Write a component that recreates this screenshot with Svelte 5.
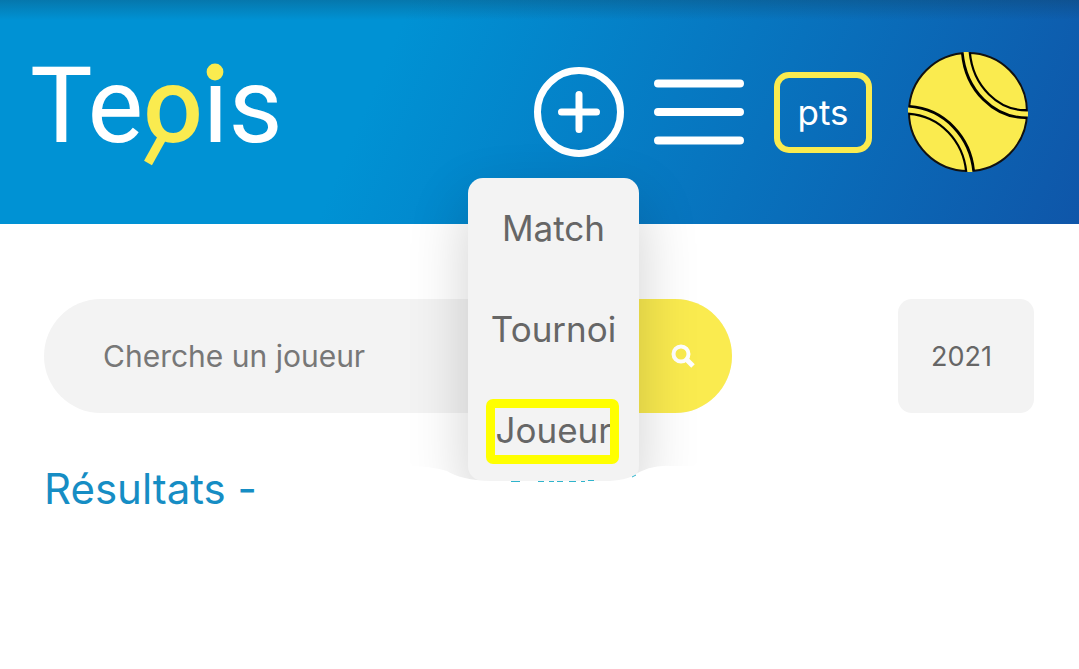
<script>
  const actions = ['Match', 'Tournoi', 'Joueur'];
  let query = $state('');
  let year = $state('2021');
  let menuOpen = $state(true);
</script>

<div class="page">
  <header>
    <a class="logo" href="#accueil" aria-label="Tepis">
      <svg width="270" height="150" viewBox="0 -15 270 150">
        <text x="6" y="90" class="word">Te<tspan class="accent">o</tspan>is</text>
        <path class="handle" d="M139 84L124 111" />
        <circle cx="191" cy="20" r="8.4" fill="#faeb4f" />
      </svg>
    </a>
    <nav>
      <div class="add">
        <button aria-label="Ajouter" aria-expanded={menuOpen} onclick={() => (menuOpen = !menuOpen)}>
          <svg width="90" height="90" viewBox="0 0 90 90" fill="none" stroke="#fff" stroke-width="7">
            <circle cx="45" cy="45" r="41.5" />
            <path d="M27.5 45h35M45 27.5v35" stroke-linecap="round" />
          </svg>
        </button>
        {#if menuOpen}
          <ul class="menu">
            {#each actions as action}
              <li class:selected={action === 'Joueur'}><a href="#{action}">{action}</a></li>
            {/each}
          </ul>
        {/if}
      </div>
      <button aria-label="Menu">
        <svg width="90" height="90" viewBox="0 0 90 90" stroke="#fff" stroke-width="8" stroke-linecap="round">
          <path d="M4 16.5h82M4 45h82M4 73.5h82" />
        </svg>
      </button>
      <button class="points">pts</button>
      <button class="ball" aria-label="Profil">
        <svg width="120" height="120" viewBox="0 0 120 120" fill="none">
          <circle cx="60" cy="60" r="59" fill="#faeb4f" stroke="#111" stroke-width="2" />
          <path d="M58 1C61 36 88 63 119 62M1 58C35 60 59 88 62 119" stroke="#000" stroke-width="10" />
          <path d="M58 -1C61 36 88 63 121 62M-1 58C35 60 59 88 62 121" stroke="#faeb4f" stroke-width="5" />
        </svg>
      </button>
    </nav>
  </header>

  <main>
    <div class="filters">
      <form class="search" onsubmit={(e) => e.preventDefault()}>
        <input type="text" aria-label="Cherche un joueur" placeholder="Cherche un joueur" bind:value={query} />
        <button aria-label="Chercher">
          <svg width="24" height="24" viewBox="0 0 24 24" fill="none" stroke="#fff" stroke-width="4">
            <circle cx="10" cy="10" r="7.5" />
            <path d="M15 15l7 7" stroke-width="5" />
          </svg>
        </button>
      </form>
      <select aria-label="Année" bind:value={year}>
        <option>2021</option>
        <option>2020</option>
      </select>
    </div>
    <section>
      <h1>Résultats -</h1>
      <svg class="cover" width="460" height="120" viewBox="0 0 460 120">
        <path fill="#fff" d="M0 11C30 7 54 7 72 13Q86 22 116 23H235Q250 22 258 18Q275 6 298 8L310 8L460 0V120H0Z" />
        <path fill="none" stroke="#2fb4cc" stroke-width="1" d="M136 23.500h9M163 23.500h6M174 23.500h5M182 23.500h6M194 23.500h7M206 23.500h4M213 22.500h6M257 19l4-2" />
      </svg>
    </section>
  </main>
</div>

<style>
  :global(body) {
    margin: 0;
    background: #fff;
  }
  .page {
    font-family: Inter, 'Noto Sans', sans-serif;
    color: #666;
  }
  button {
    display: block;
    padding: 0;
    border: 0;
    background: none;
    font: inherit;
    cursor: pointer;
  }
  svg {
    display: block;
  }
  a {
    color: inherit;
    text-decoration: none;
  }
  header {
    position: relative;
    z-index: 1;
    display: flex;
    justify-content: space-between;
    align-items: center;
    box-sizing: border-box;
    height: 224px;
    padding: 0 51px 0 24px;
    background:
      linear-gradient(rgba(20, 50, 70, 0.28), rgba(20, 50, 70, 0) 20px),
      linear-gradient(113deg, #0092d4 35%, #0f56a9);
  }
  .word {
    font-family: Roboto, sans-serif;
    font-size: 105px;
    fill: #fff;
  }
  .accent {
    fill: #faeb4f;
    font-weight: 500;
  }
  .handle {
    stroke: #faeb4f;
    stroke-width: 9;
  }
  nav {
    display: flex;
    align-items: center;
    gap: 30px;
  }
  .add {
    position: relative;
  }
  .menu {
    position: absolute;
    top: 111px;
    right: -15px;
    width: 171px;
    margin: 0;
    padding: 0;
    list-style: none;
    border-radius: 15px;
    background: #f3f3f3;
    box-shadow: 0 24px 60px rgba(0, 0, 0, 0.19);
    font-size: 35px;
    line-height: 101px;
    text-align: center;
  }
  .menu li {
    position: relative;
  }
  .selected::after {
    content: '';
    position: absolute;
    inset: 19px 20px 17px 18px;
    border: 9px solid #ff0;
    border-radius: 7px;
  }
  .points {
    box-sizing: border-box;
    width: 98px;
    height: 81px;
    border: 6px solid #faeb4f;
    border-radius: 15px;
    color: #fff;
    font-size: 35px;
    line-height: 60px;
  }
  .ball {
    margin-left: 6px;
  }
  main {
    padding: 75px 45px 60px 44px;
  }
  .filters {
    display: flex;
    justify-content: space-between;
    height: 114px;
  }
  .search {
    display: flex;
    flex: 0 1 688px;
    overflow: hidden;
    border-radius: 57px;
    background: #f3f3f3;
  }
  input {
    flex: 1;
    min-width: 0;
    padding: 0 20px 0 59px;
    border: 0;
    outline: 0;
    background: none;
    font: inherit;
    font-size: 30px;
    color: #666;
  }
  input::placeholder {
    color: #777;
    opacity: 1;
  }
  .search button {
    display: grid;
    place-items: center;
    width: 98px;
    background: #faeb4f;
  }
  select {
    appearance: none;
    width: 136px;
    padding: 0 33px;
    border: 0;
    border-radius: 14px;
    background: #f3f3f3;
    color: #666;
    font: inherit;
    font-size: 27px;
  }
  section {
    position: relative;
    z-index: 2;
    margin-top: 50px;
  }
  h1 {
    margin: 0;
    color: #168dc4;
    font-size: 42px;
    font-weight: 400;
    line-height: 52px;
  }
  .cover {
    position: absolute;
    top: -5px;
    left: 331px;
  }
</style>
